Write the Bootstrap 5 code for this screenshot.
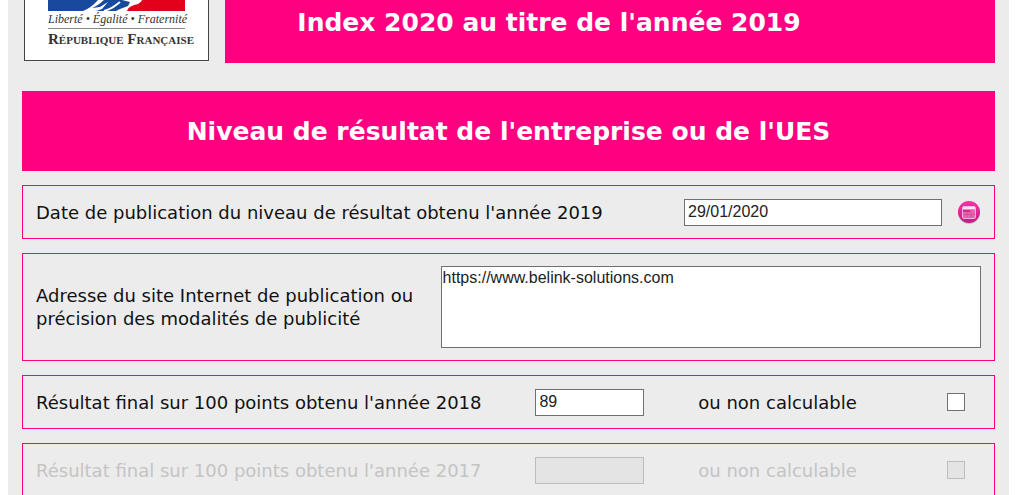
<!DOCTYPE html>
<html lang="fr">
<head>
<meta charset="utf-8">
<meta name="viewport" content="width=device-width, initial-scale=1">
<title>Index égalité professionnelle</title>
<link href="https://cdn.jsdelivr.net/npm/bootstrap@5.3.0/dist/css/bootstrap.min.css" rel="stylesheet">
<style>
  :root { --pink: #ff0080; --sheet: #ececec; }
  body { font-family: "DejaVu Sans", sans-serif; font-size: 18px; line-height: 23px; color: #111; background: #fff; overflow-x: hidden; }
  .sheet { background: var(--sheet); margin: -70px 15px 0 8px; padding: 0 14px 14px; }
  .masthead { gap: 16px; margin-bottom: 28px; }
  .logo-frame { width: 185px; margin: 2px 0 2px 2px; border: 1px solid #444; background: #fff; padding: 0 23px 11px; line-height: 16px; color: #333; font-family: "Liberation Serif", serif; }
  .logo-frame svg { display: block; width: 137px; height: 72px; }
  .motto { font-size: 12px; font-style: italic; border-bottom: 1px solid #888; width: 100%; height: 18px; }
  .republic { font-size: 15px; font-weight: 700; font-variant: small-caps; line-height: 20px; }
  .banner { background: var(--pink); color: #fff; font-weight: 700; text-align: center; }
  .banner-top { padding: 20px 122px 24px 0; }
  .banner-top .title { font-size: 39px; line-height: 56px; }
  .banner-title { font-size: 25px; line-height: 33px; margin: 0; font-weight: 700; }
  .banner-section { padding: 24px 0 23px; }
  .stack { gap: 14px; }
  .field-row { border: 1px solid var(--pink); padding: 12px 13px; min-height: 54px; }
  .entry { font-family: "Liberation Sans", sans-serif; font-size: 16px; line-height: 20px; color: #222; background: #fff; border: 1px solid #707070; border-radius: 0; height: 27px; padding: 0 3px; }
  .entry-date { width: 258px; }
  .entry-score { width: 109px; }
  .entry-area { height: 82px; padding: 1px; resize: none; display: block; width: 100%; }
  .cal-btn { width: 24px; height: 24px; margin-left: 15px; }
  .grid-area { display: grid; grid-template-columns: 405fr 541fr; }
  .grid-score { display: grid; grid-template-columns: 500fr 163fr 283fr; }
  .tick { appearance: none; width: 18px; height: 18px; border: 1px solid #707070; background: #fff; margin: 0 16px 0 0; border-radius: 0; }
  .tick:checked { background: var(--pink); }
  .is-off { color: #c4c4c4; }
  .is-off .entry, .is-off .tick { background: #e4e4e4; border-color: #bdbdbd; }
</style>
</head>
<body>
<main class="sheet">
  <header class="masthead d-flex">
    <div class="logo-frame d-flex flex-column justify-content-end flex-shrink-0">
      <svg viewBox="0 0 137 72" aria-hidden="true">
        <path fill="#174a9c" d="M0 0H66L58 22 66 34 55 46 68 55 74 61 82 63 80 67 72 70 68 72H0z"/>
        <path fill="#e2001a" d="M137 0H80Q96 14 92 30L98 44 91 50Q99 60 90 65 80 67 79 72H137z"/>
        <path fill="#fff" d="M35 72Q43 69 50 61L58 59Q50 67 44 69L52 68 60 63 54 70 48 72z"/>
        <path fill="none" stroke="#fff" stroke-width="2" d="M56 72Q64 70 72 63"/>
      </svg>
      <div class="motto text-nowrap">Liberté • Égalité • Fraternité</div>
      <div class="republic text-nowrap">République Française</div>
    </div>
    <div class="banner banner-top flex-grow-1">
      <div class="title">Egalité professionnelle</div>
      <h1 class="banner-title">Index 2020 au titre de l'année 2019</h1>
    </div>
  </header>
  <form class="stack d-flex flex-column">
    <div class="banner banner-section">
      <h2 class="banner-title">Niveau de résultat de l'entreprise ou de l'UES</h2>
    </div>
    <div class="field-row d-flex align-items-center">
      <label class="flex-grow-1" for="pubdate">Date de publication du niveau de résultat obtenu l'année 2019</label>
      <input class="entry entry-date" type="text" id="pubdate" value="29/01/2020">
      <button class="cal-btn border-0 bg-transparent p-0" type="button" aria-label="Calendrier">
        <svg class="d-block" width="24" height="24" viewBox="0 0 24 24">
          <defs><linearGradient id="orb" x2="0" y2="1"><stop stop-color="#ff2fa5"/><stop offset="1" stop-color="#c51c82"/></linearGradient></defs>
          <circle cx="12" cy="13" r="11" fill="#999" opacity=".45"/>
          <circle cx="12" cy="12" r="11" fill="url(#orb)"/>
          <rect x="5.500" y="6.500" width="13" height="12" rx="1.500" fill="#e765b0" stroke="#f9b0d8"/>
          <path d="M6 8h12" stroke="#ffe3f2" stroke-width="2.500"/>
          <path d="M6 11h7" stroke="#c9187f" stroke-width="1.500"/>
          <path d="M6 14.500h12M10 12v6M14 10v8" stroke="#d84a9d" stroke-width=".8"/>
        </svg>
      </button>
    </div>
    <div class="field-row grid-area align-items-center">
      <label for="site">Adresse du site Internet de publication ou précision des modalités de publicité</label>
      <textarea class="entry entry-area" id="site">https://www.belink-solutions.com</textarea>
    </div>
    <div class="field-row grid-score align-items-center">
      <label for="score18">Résultat final sur 100 points obtenu l'année 2018</label>
      <input class="entry entry-score" type="text" id="score18" value="89">
      <div class="d-flex align-items-center justify-content-between">
        <label for="nc18">ou non calculable</label>
        <input class="tick" type="checkbox" id="nc18">
      </div>
    </div>
    <div class="field-row grid-score align-items-center is-off">
      <label for="score17">Résultat final sur 100 points obtenu l'année 2017</label>
      <input class="entry entry-score" type="text" id="score17" disabled>
      <div class="d-flex align-items-center justify-content-between">
        <label for="nc17">ou non calculable</label>
        <input class="tick" type="checkbox" id="nc17" disabled>
      </div>
    </div>
  </form>
</main>
<script src="https://cdn.jsdelivr.net/npm/bootstrap@5.3.0/dist/js/bootstrap.bundle.min.js"></script>
</body>
</html>
